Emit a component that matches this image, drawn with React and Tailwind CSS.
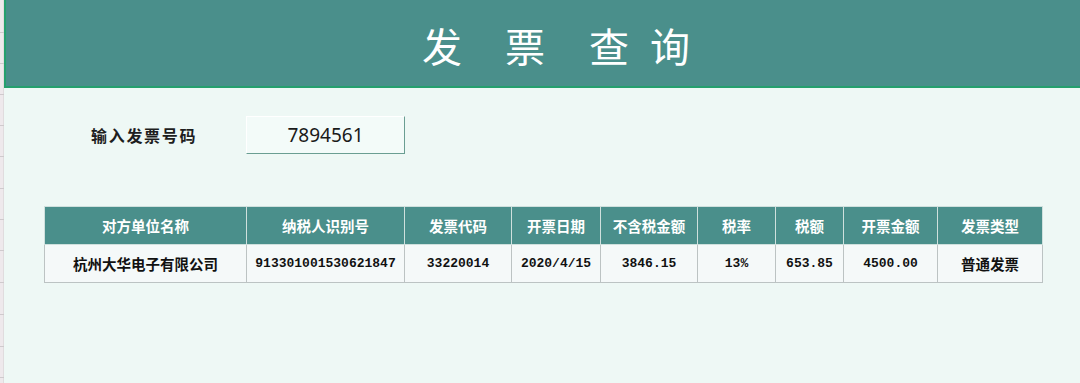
import React from "react";

const cjk = "font-['Noto_Sans_CJK_SC',_'Noto_Sans',_sans-serif]";
const mono = "font-['Liberation_Mono',_'Noto_Sans_CJK_SC',_monospace]";

const columns = [
  { title: "对方单位名称", width: "w-[202px]", value: "杭州大华电子有限公司", num: false },
  { title: "纳税人识别号", width: "w-[158px]", value: "913301001530621847", num: true },
  { title: "发票代码", width: "w-[107px]", value: "33220014", num: true },
  { title: "开票日期", width: "w-[89px]", value: "2020/4/15", num: true },
  { title: "不含税金额", width: "w-[97px]", value: "3846.15", num: true },
  { title: "税率", width: "w-[78px]", value: "13%", num: true },
  { title: "税额", width: "w-[68px]", value: "653.85", num: true },
  { title: "开票金额", width: "w-[94px]", value: "4500.00", num: true },
  { title: "发票类型", width: "w-[105px]", value: "普通发票", num: false },
];

// row marks of the sheet gutter on the far left
const gutterLines = [32, 63, 94, 125, 156, 188, 219, 250, 282, 314, 346, 377];

function Gutter() {
  return (
    <div className="relative w-[4px] h-full shrink-0 bg-[#eee9ec] border-r border-[#e0dcde]">
      {gutterLines.map((y) => (
        <div key={y} className="absolute left-0 w-[4px] h-px bg-[#cfcacd]" style={{ top: y }} />
      ))}
    </div>
  );
}

export default function App() {
  return (
    <div className={`flex w-full h-[383px] bg-[#eef8f5] overflow-hidden ${cjk}`}>
      <Gutter />
      <div className="flex-1 flex flex-col">
        {/* title bar */}
        <div className="h-[88px] shrink-0 bg-[#4a8f8b] border-l-2 border-b-2 border-[#25a06e] flex items-center pl-[416px] pt-[4px]">
          <span className="text-[40px] leading-none text-white">发</span>
          <span className="ml-[43px] text-[40px] leading-none text-white">票</span>
          <span className="ml-[44px] text-[40px] leading-none text-white">查</span>
          <span className="ml-[21px] text-[40px] leading-none text-white">询</span>
        </div>

        {/* search */}
        <div className="mt-[28px] flex items-center pl-[87px]">
          <div className="w-[155px] text-[16px] font-bold tracking-[1.7px] text-[#1e1e1e]">输入发票号码</div>
          <div className="w-[159px] h-[38px] flex items-center justify-center bg-[#f3fbf9] border border-t-white border-l-white border-r-[#6a9e92] border-b-[#6a9e92] font-['Noto_Sans',_sans-serif] text-[19px] text-[#1a1a1a]">
            7894561
          </div>
        </div>

        {/* result table */}
        <div className="mt-[52px] ml-[40px]">
          <table className="table-fixed border-collapse">
            <thead>
              <tr className="h-[38px] bg-[#4a8f8b]">
                {columns.map((c) => (
                  <th
                    key={c.title}
                    className={`${c.width} p-0 border border-[#cfe0dd] text-center text-[14.5px] font-bold text-white`}
                  >
                    {c.title}
                  </th>
                ))}
              </tr>
            </thead>
            <tbody>
              <tr className="h-[38px] bg-[#f5f9f9]">
                {columns.map((c) => (
                  <td
                    key={c.title}
                    className={`p-0 border border-[#bcc3c3] text-center font-bold text-[#111] ${
                      c.num ? `${mono} text-[13px]` : "text-[14.5px]"
                    }`}
                  >
                    {c.value}
                  </td>
                ))}
              </tr>
            </tbody>
          </table>
        </div>
      </div>
    </div>
  );
}
